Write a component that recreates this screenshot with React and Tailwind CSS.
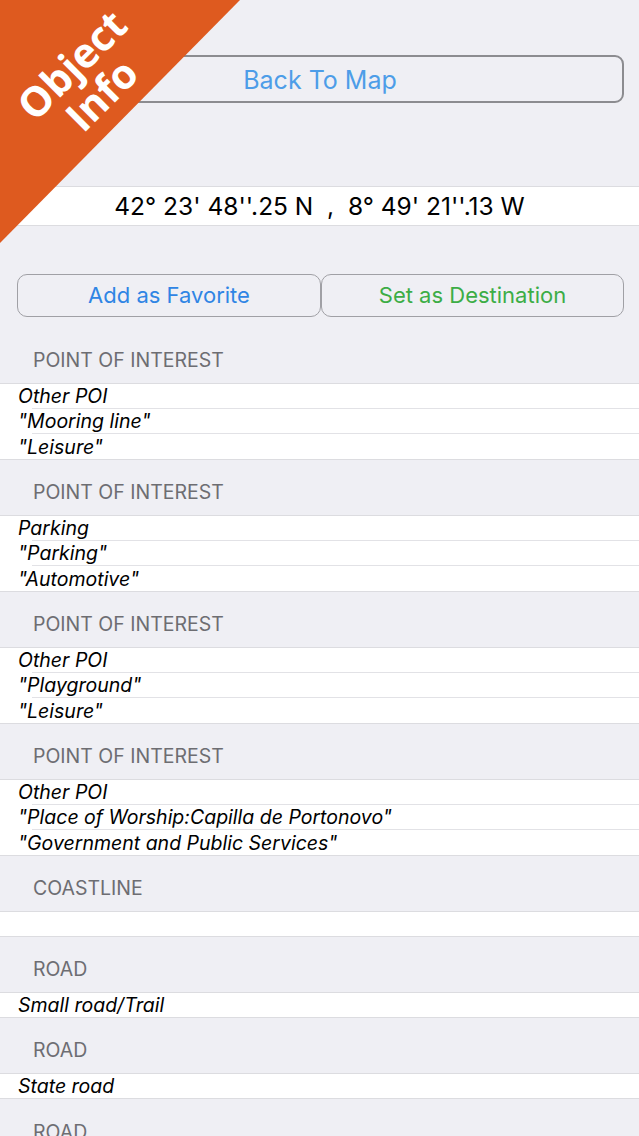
import React from "react";

const font = { fontFamily: "Inter, 'Liberation Sans', sans-serif" };

function Header({ label, first }) {
  return (
    <div
      className={`${first ? "h-[67px]" : "h-[56px]"} flex items-end pb-[11px] pl-[33px] border-b border-[#dcdce0] text-[19.5px] leading-[24px] text-[#6d6d72]`}
    >
      {label}
    </div>
  );
}

function Rows({ items }) {
  return (
    <div className="bg-white">
      {items.map((t, i) => {
        const last = i === items.length - 1;
        if (last) {
          return (
            <div
              key={i}
              className={`${items.length > 1 ? "h-[26px]" : "h-[25px]"} flex items-center pl-[18px] border-b border-[#dcdce0] italic text-[19.5px] leading-[24px] text-black whitespace-nowrap`}
            >
              {t}
            </div>
          );
        }
        return (
          <div
            key={i}
            className="h-[25px] ml-[32px] flex items-center border-b border-[#e2e2e6] italic text-[19.5px] leading-[24px] text-black"
          >
            <span className="-ml-[14px] whitespace-nowrap">{t}</span>
          </div>
        );
      })}
    </div>
  );
}

export default function App() {
  const sections = [
    ["POINT OF INTEREST", ["Other POI", '"Mooring line"', '"Leisure"']],
    ["POINT OF INTEREST", ["Parking", '"Parking"', '"Automotive"']],
    ["POINT OF INTEREST", ["Other POI", '"Playground"', '"Leisure"']],
    [
      "POINT OF INTEREST",
      [
        "Other POI",
        '"Place of Worship:Capilla de Portonovo"',
        '"Government and Public Services"',
      ],
    ],
    ["COASTLINE", ["\u00a0"]],
    ["ROAD", ["Small road/Trail"]],
    ["ROAD", ["State road"]],
  ];

  return (
    <div
      className="relative w-[639px] h-[1136px] overflow-hidden bg-[#efeff4]"
      style={font}
    >
      <div className="pt-[55px] pl-[16px] pr-[15px]">
        <div className="h-[48px] rounded-[9px] border-2 border-[#8c8c90] flex items-center justify-center pt-[3px] text-[25px] text-[#4d9de8]">
          Back To Map
        </div>
      </div>

      <div className="mt-[83px] h-[40px] bg-white border-y border-[#dcdce0] flex items-center justify-center text-[24.5px] text-black whitespace-pre">
        {"42° 23' 48''.25 N  ,  8° 49' 21''.13 W"}
      </div>

      <div className="mt-[48px] flex pl-[17px] pr-[15px]">
        <div className="w-[304px] h-[43px] rounded-[10px] border border-[#a0a0a5] flex items-center justify-center text-[22px] text-[#2f85e4]">
          Add as Favorite
        </div>
        <div className="flex-1 h-[43px] rounded-[10px] border border-[#a0a0a5] flex items-center justify-center text-[22px] text-[#3cad46]">
          Set as Destination
        </div>
      </div>

      {sections.map(([label, items], i) => (
        <div key={i}>
          <Header label={label} first={i === 0} />
          <Rows items={items} />
        </div>
      ))}
      <div className="h-[56px] flex items-end pb-[11px] pl-[33px] text-[19.5px] leading-[24px] text-[#6d6d72]">
        ROAD
      </div>

      <div className="absolute left-0 top-0 w-[240px] h-[243px] pointer-events-none">
        <svg width="240" height="243" className="absolute left-0 top-0">
          <polygon points="0,0 240,0 0,243" fill="#de5a1f" />
        </svg>
        <div
          className="absolute left-[86px] top-[79px] -translate-x-1/2 -translate-y-1/2 -rotate-45 text-white font-bold text-[41px] leading-[42px] text-center whitespace-nowrap"
          style={{ fontFamily: "'Open Sans', Inter, sans-serif" }}
        >
          <div>Object</div>
          <div>Info</div>
        </div>
      </div>
    </div>
  );
}
